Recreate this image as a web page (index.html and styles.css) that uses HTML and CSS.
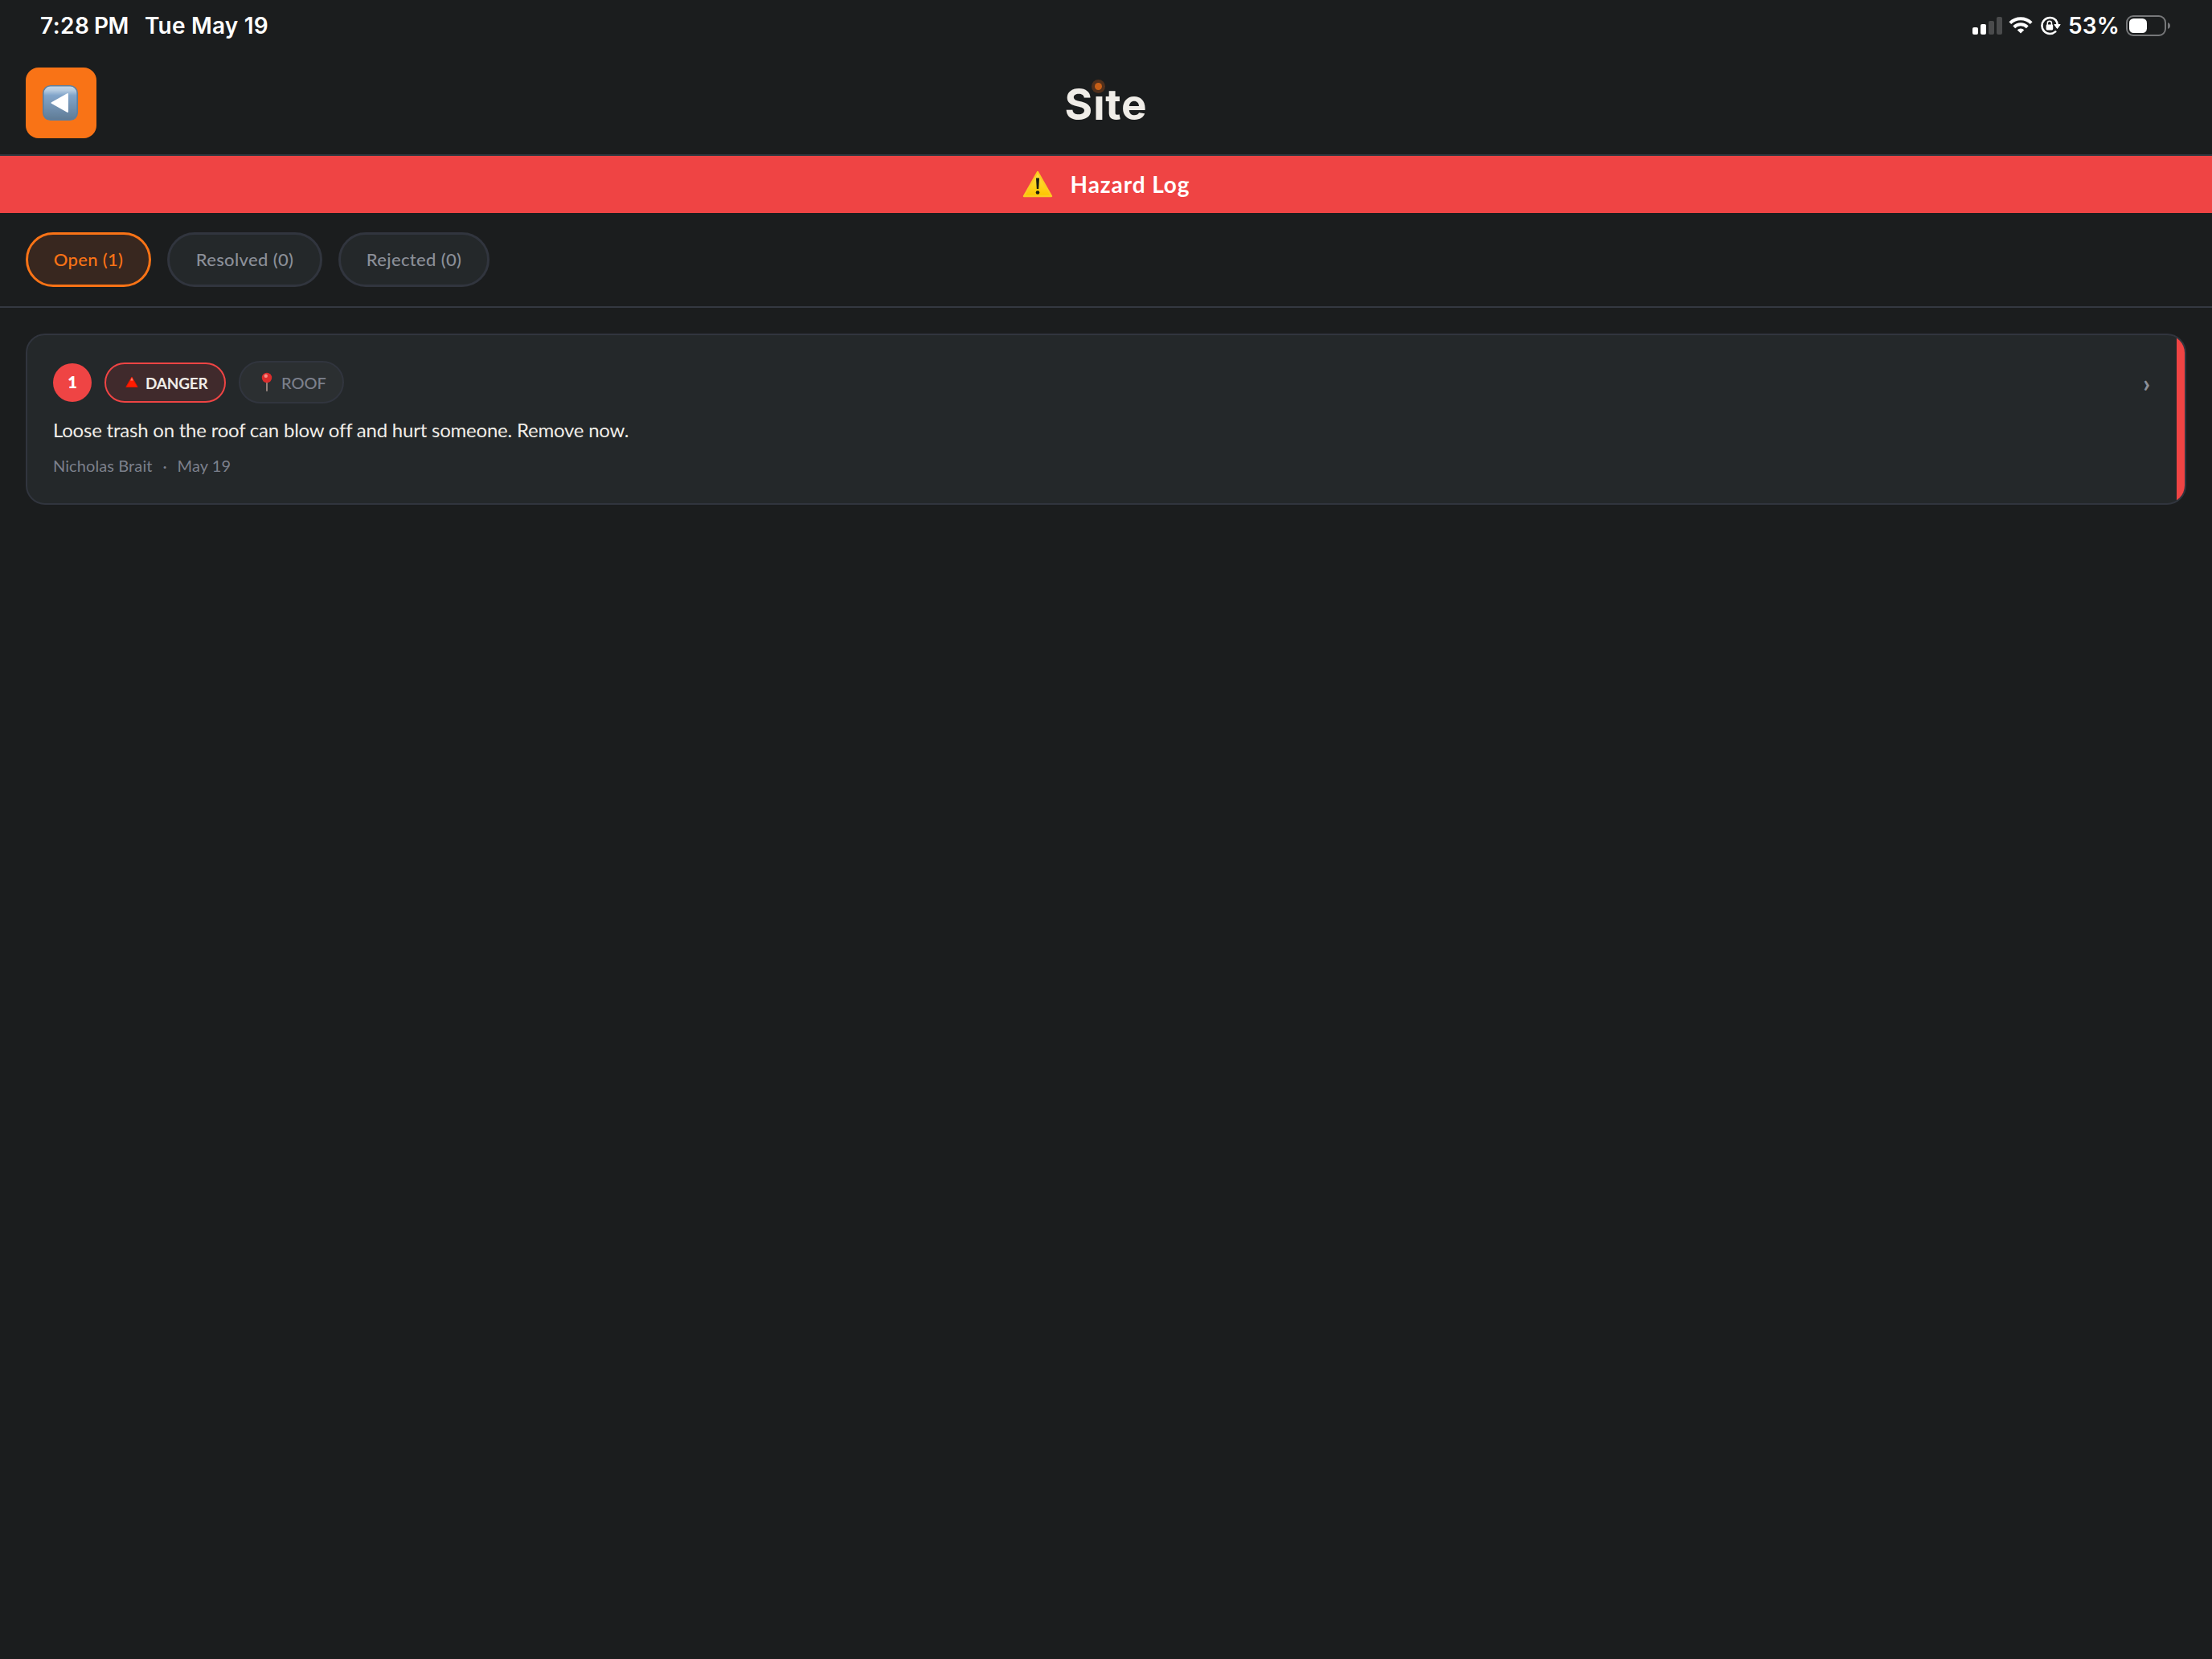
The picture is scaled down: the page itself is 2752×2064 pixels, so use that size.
FILE: index.html
```html
<!DOCTYPE html>
<html lang="en">
<head>
    <meta charset="UTF-8">
    <meta name="viewport" content="width=device-width, initial-scale=1.0">
    <title>Site - Hazard Log</title>
    <link rel="stylesheet" href="styles.css">
</head>
<body>
    <div class="status-bar">
        <span class="time">7:28</span>
        <span class="ampm">PM</span>
        <span class="date">Tue May 19</span>
        <div class="status-icons">
            <svg class="signal" width="38" height="24" viewBox="0 0 38 24">
                <rect x="0" y="14" width="7" height="9" rx="2" fill="#fff"/>
                <rect x="10" y="10" width="7" height="13" rx="2" fill="#fff"/>
                <rect x="20" y="6" width="7" height="17" rx="2" fill="#4a4b4c"/>
                <rect x="30" y="1" width="7" height="22" rx="2" fill="#4a4b4c"/>
            </svg>
            <svg class="wifi" width="30" height="22" viewBox="0 0 30 22">
                <path d="M1.8 7.6a19 19 0 0 1 26.4 0" fill="none" stroke="#fff" stroke-width="4"/>
                <path d="M6.7 12.7a12 12 0 0 1 16.6 0" fill="none" stroke="#fff" stroke-width="4"/>
                <path d="M15 20.6l-4.3-4.4a6.3 6.3 0 0 1 8.6 0z" fill="#fff"/>
            </svg>
            <svg class="lock" width="26" height="24" viewBox="0 0 26 24">
                <path d="M19.4 4.900A10 10 0 1 0 19.200 19.400" fill="none" stroke="#fff" stroke-width="2.600" stroke-linecap="round"/>
                <path d="M19.400 4.900A10 10 0 0 1 21.800 11" fill="none" stroke="#fff" stroke-width="2.600"/>
                <path d="M17.800 10.600h7.400l-3.700 5z" fill="#fff" stroke="#fff" stroke-linejoin="round"/>
                <rect x="7.600" y="10.600" width="8.600" height="6.800" rx="1.300" fill="#fff"/>
                <path d="M9.300 11V8.900a2.600 2.600 0 0 1 5.200 0V11" fill="none" stroke="#fff" stroke-width="1.500"/>
            </svg>
            <span class="percent">53%</span>
            <svg class="battery" width="56" height="26" viewBox="0 0 56 26">
                <rect x="1" y="1" width="48" height="24" rx="8" fill="none" stroke="#77787a" stroke-width="2"/>
                <rect x="4" y="4" width="22" height="18" rx="5.5" fill="#fff"/>
                <path d="M52 9c4 1.2 4 6.800 0 8z" fill="#77787a"/>
            </svg>
        </div>
    </div>

    <header class="header">
        <button class="back-btn" aria-label="Back">
            <svg width="44" height="44" viewBox="0 0 44 44">
                <defs>
                    <linearGradient id="keyFill" x1="0" y1="0" x2="0" y2="1">
                        <stop offset="0" stop-color="#c3d5e6"/>
                        <stop offset=".13" stop-color="#b5cbe0"/>
                        <stop offset=".28" stop-color="#82a5ca"/>
                        <stop offset="1" stop-color="#5f7b95"/>
                    </linearGradient>
                </defs>
                <rect x=".8" y=".8" width="42.4" height="42.4" rx="9" fill="url(#keyFill)" stroke="#5d7f9f" stroke-width="1.6"/>
                <path d="M11.5 22L31 11v22z" fill="#fff" stroke="#fff" stroke-width="2" stroke-linejoin="round"/>
            </svg>
        </button>
        <div class="logo">S<span class="logo-i">ı</span>te</div>
    </header>

    <div class="banner">
        <svg width="38" height="34" viewBox="0 0 38 34">
            <defs>
                <linearGradient id="warnFill" x1="0" y1="0" x2="0" y2="1">
                    <stop offset="0" stop-color="#ffdc4e"/>
                    <stop offset=".6" stop-color="#ffd21a"/>
                    <stop offset="1" stop-color="#fcc400"/>
                </linearGradient>
            </defs>
            <path d="M19 2L36 32H2z" fill="url(#warnFill)" stroke="#fcca20" stroke-width="2.4" stroke-linejoin="round"/>
            <path d="M17 9.500h4l-.8 13.500h-2.400z" fill="#1d1d10"/>
            <circle cx="19" cy="27.500" r="2.300" fill="#1d1d10"/>
        </svg>
        <span class="banner-title">Hazard Log</span>
    </div>

    <nav class="tabs">
        <button class="tab tab-open active">Open (1)</button>
        <button class="tab tab-resolved">Resolved (0)</button>
        <button class="tab tab-rejected">Rejected (0)</button>
    </nav>

    <main class="list">
        <article class="card">
            <div class="card-head">
                <span class="num">1</span>
                <span class="badge danger">
                    <svg width="16" height="15" viewBox="0 0 16 15">
                        <path d="M8 1L15.200 13.500H.8z" fill="#ff1c00" stroke="#d91500" stroke-linejoin="round"/>
                        <path d="M8 1.500l1.800 4H6.200z" fill="#ff7a68"/>
                    </svg>
                    <span class="badge-text">DANGER</span>
                </span>
                <span class="badge place">
                    <svg width="14" height="25" viewBox="0 0 14 25">
                        <path d="M7 12v11" stroke="#a08d85" stroke-width="1.800" stroke-linecap="round"/>
                        <circle cx="7" cy="7" r="6.200" fill="#dc2d2c"/>
                        <circle cx="5.800" cy="4.800" r="2.200" fill="#f58c85"/>
                    </svg>
                    <span class="badge-text">ROOF</span>
                </span>
                <span class="chevron">›</span>
            </div>
            <p class="desc">Loose trash on the roof can blow off and hurt someone. Remove now.</p>
            <div class="meta">
                <span class="author">Nicholas Brait</span>
                <span class="dot">·</span>
                <span class="day">May 19</span>
            </div>
        </article>
    </main>
</body>
</html>
```

FILE: styles.css
```css
* {
    box-sizing: border-box;
}
body {
    margin: 0;
    min-height: 100vh;
    background-color: #1b1d1e;
    color: #f0ede8;
    font-family: Lato, "Open Sans", sans-serif;
}
button {
    font-family: inherit;
    padding: 0;
    cursor: pointer;
}
svg {
    display: block;
    flex-shrink: 0;
}

/* status bar */
.status-bar {
    display: flex;
    align-items: center;
    height: 64px;
    padding: 0 51px 0 50px;
    color: #fff;
    font-family: Inter, sans-serif;
    font-size: 28px;
    font-weight: 600;
    line-height: 64px;
    letter-spacing: 0.2px;
    white-space: nowrap;
}
.time {
    width: 67px;
    letter-spacing: 0.5px;
}
.ampm {
    width: 63px;
    letter-spacing: -0.5px;
}
.status-icons {
    display: flex;
    align-items: center;
    margin-left: auto;
}
.wifi {
    margin-left: 7px;
}
.lock {
    margin-left: 9px;
}
.percent {
    width: 80px;
    padding-left: 9px;
}
.battery {
    margin-left: 1px;
}

/* header */
.header {
    display: grid;
    grid-template-columns: 88px 1fr 88px;
    align-items: center;
    height: 130px;
    padding: 0 32px;
    border-bottom: 2px solid #343841;
}
.back-btn {
    display: flex;
    align-items: center;
    justify-content: center;
    width: 88px;
    height: 88px;
    padding-right: 2px;
    border: none;
    border-radius: 16px;
    background-color: #f97316;
}
.logo {
    padding-top: 3px;
    text-align: center;
    font-family: Inter, sans-serif;
    font-size: 53px;
    font-weight: 700;
    line-height: 60px;
    letter-spacing: 0.8px;
}
.logo-i {
    position: relative;
}
.logo-i::before {
    content: "";
    position: absolute;
    top: 5px;
    left: 50%;
    width: 9px;
    height: 9px;
    margin-left: -6px;
    border-radius: 50%;
    background-color: #c75f17;
    box-shadow: 0 0 0 4px #51301c;
}

/* banner */
.banner {
    display: flex;
    align-items: center;
    justify-content: center;
    gap: 22px;
    height: 71px;
    padding-bottom: 2px;
    background-color: #ef4444;
}
.banner-title {
    color: #fff;
    font-size: 28px;
    font-weight: 700;
    letter-spacing: 0.9px;
}

/* tabs */
.tabs {
    display: flex;
    gap: 20px;
    height: 118px;
    padding: 24px 32px;
    border-bottom: 2px solid #343841;
}
.tab {
    height: 68px;
    padding-bottom: 2px;
    border: 3px solid #31353e;
    border-radius: 34px;
    background-color: #24282a;
    color: #8b8f98;
    font-size: 22px;
    font-weight: 500;
    letter-spacing: 0.35px;
}
.tab-open {
    width: 156px;
}
.tab-resolved {
    width: 193px;
}
.tab-rejected {
    width: 188px;
}
.tab.active {
    border-color: #f97316;
    background-color: #38271f;
    color: #f97316;
}

/* hazard card */
.list {
    padding: 32px;
}
.card {
    position: relative;
    height: 213px;
    padding: 32px;
    overflow: hidden;
    border: 2px solid #31353e;
    border-radius: 24px;
    background-color: #24282a;
}
.card::after {
    content: "";
    position: absolute;
    top: 0;
    right: 0;
    bottom: 0;
    width: 10px;
    background-color: #ef4444;
}
.card-head {
    display: flex;
    align-items: center;
    gap: 16px;
    height: 53px;
}
.num {
    width: 48px;
    height: 48px;
    border-radius: 50%;
    background-color: #ef4444;
    color: #fff;
    font-size: 20px;
    font-weight: 800;
    line-height: 46px;
    text-align: center;
}
.badge {
    display: flex;
    align-items: center;
    border: 2px solid #31353e;
    border-radius: 27px;
}
.danger {
    width: 151px;
    height: 50px;
    padding-left: 24px;
    gap: 9px;
    border-color: #ef4444;
    background-color: #402a2c;
    font-size: 19px;
    font-weight: 700;
    letter-spacing: -0.2px;
}
.danger .badge-text {
    padding-top: 2px;
}
.place {
    width: 131px;
    height: 53px;
    padding-left: 26px;
    gap: 11px;
    background-color: #2b2f31;
    color: #7c808c;
    font-size: 20px;
    font-weight: 500;
}
.chevron {
    margin-left: auto;
    padding-right: 11px;
    color: #8b8f98;
    font-size: 30px;
    font-weight: 900;
    line-height: 50px;
}
.desc {
    margin: 14px 0 0;
    font-size: 24px;
    line-height: 38px;
    letter-spacing: -0.22px;
}
.meta {
    display: flex;
    margin-top: 10px;
    color: #7c808c;
    font-size: 20px;
    line-height: 30px;
    letter-spacing: 0.1px;
}
.dot {
    width: 31px;
    text-align: center;
}
```
